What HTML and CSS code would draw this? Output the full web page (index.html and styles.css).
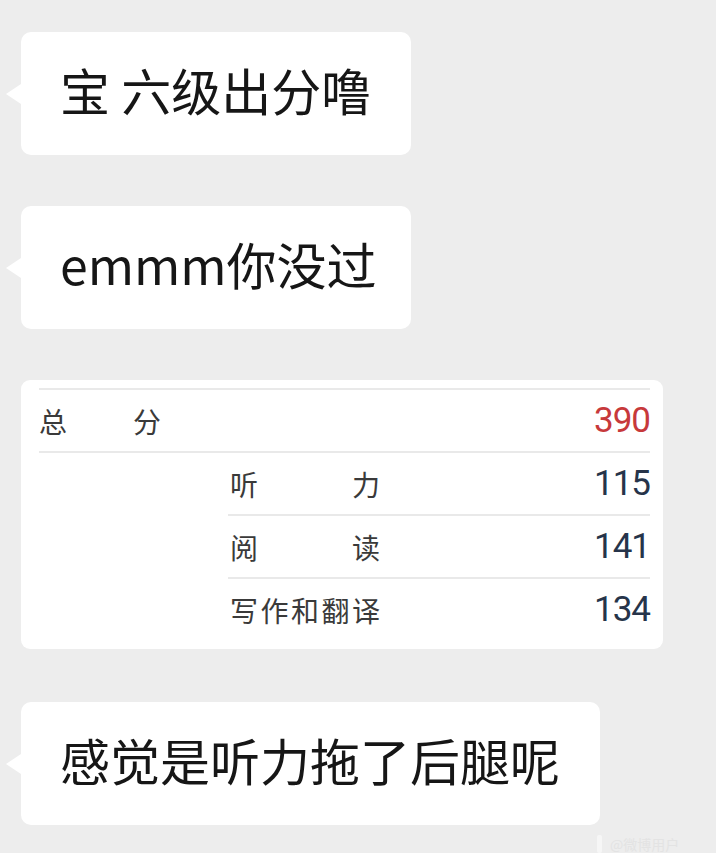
FILE: index.html
```html
<!DOCTYPE html>
<html lang="zh-CN">
<head>
  <meta charset="UTF-8" />
  <meta name="viewport" content="width=device-width, initial-scale=1.0"/>
  <title>六级出分</title>
  <link rel="stylesheet" href="styles.css">
</head>
<body>

  <main class="chat">
    <div class="bubble w-short">宝 六级出分噜</div>
    <div class="bubble w-short">emmm你没过</div>

    <div class="score-card">
      <div class="row total">
        <span class="label label-total">总分</span>
        <span class="num red">390</span>
      </div>
      <div class="row sub">
        <span class="label">听力</span>
        <span class="num">115</span>
      </div>
      <div class="row sub">
        <span class="label">阅读</span>
        <span class="num">141</span>
      </div>
      <div class="row sub last">
        <span class="label">写作和翻译</span>
        <span class="num">134</span>
      </div>
    </div>

    <div class="bubble w-long">感觉是听力拖了后腿呢</div>
  </main>

  <div class="watermark"><span class="wm-bar"></span>@微博用户</div>

</body>
</html>
```

FILE: styles.css
```css
body {
  margin: 0;
  padding: 0;
  background: #ededed;
  font-family: "Noto Sans CJK SC", "Noto Sans", sans-serif;
  width: 716px;
  height: 853px;
  overflow: hidden;
  position: relative;
}
.chat {
  display: flex;
  flex-direction: column;
  align-items: flex-start;
  gap: 51px;
  padding: 32px 0 0 21px;
}
.bubble {
  position: relative;
  background: #fff;
  border-radius: 10px;
  height: 123px;
  padding: 0 0 9px 39px;
  box-sizing: border-box;
  display: flex;
  align-items: center;
  font-size: 50px;
  line-height: 1;
  color: #161616;
  white-space: pre;
}
.w-short {
  width: 390px;
}
.w-long {
  width: 579px;
}
.bubble::before {
  content: "";
  position: absolute;
  left: -15px;
  top: 50%;
  margin-top: -10px;
  border-top: 10px solid transparent;
  border-bottom: 10px solid transparent;
  border-right: 15px solid #fff;
}
.score-card {
  background: #fff;
  border-radius: 9px;
  width: 642px;
  box-sizing: border-box;
  padding: 8px 13px 9px 18px;
  margin-bottom: 2px;
}
.row {
  display: flex;
  align-items: center;
  justify-content: space-between;
  height: 61px;
  border-bottom: 2px solid #e9e9e9;
}
.row.total {
  border-top: 2px solid #e9e9e9;
}
.row.sub {
  margin-left: 189px;
}
.row.last {
  border-bottom: none;
}
.label {
  width: 150px;
  font-size: 28px;
  color: #3a3a3a;
  text-align: justify;
  text-align-last: justify;
  padding-left: 2px;
}
.label-total {
  width: 122px;
  padding-left: 0;
}
.num {
  font-family: Roboto, "Noto Sans", sans-serif;
  font-size: 35px;
  letter-spacing: -1px;
  color: #26344a;
}
.num.red {
  color: #c7393b;
}
.watermark {
  position: absolute;
  left: 597px;
  top: 834px;
  display: flex;
  align-items: center;
  gap: 8px;
  font-size: 14px;
  color: #e3e3e3;
}
.wm-bar {
  width: 5px;
  height: 18px;
  background: #f6f6f6;
  border-radius: 2px;
}
```
